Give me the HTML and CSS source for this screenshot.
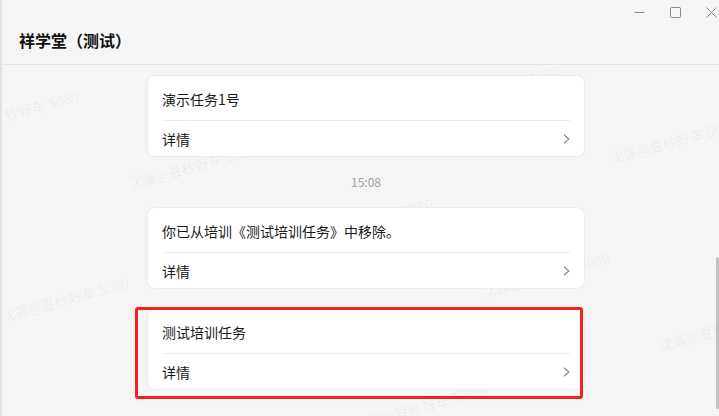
FILE: index.html
```html
<!DOCTYPE html>
<html lang="zh-CN">
<head>
    <meta charset="UTF-8">
    <meta name="viewport" content="width=device-width, initial-scale=1.0">
    <title>祥学堂（测试）</title>
    <link rel="stylesheet" href="styles.css">
</head>
<body>
    <div class="window">
        <header class="titlebar">
            <h1 class="title">祥学堂（测试）</h1>
            <div class="controls">
                <span class="ctl">
                    <svg width="11" height="11" viewBox="0 0 11 11"><path d="M0.5 5.5H10.5" stroke="#8a8a8a" stroke-width="1" fill="none"/></svg>
                </span>
                <span class="ctl">
                    <svg width="11" height="11" viewBox="0 0 11 11"><rect x="0.5" y="0.5" width="10" height="10" rx="1" stroke="#8a8a8a" stroke-width="1" fill="none"/></svg>
                </span>
                <span class="ctl">
                    <svg width="11" height="11" viewBox="0 0 11 11"><path d="M0.5 0.5L10.5 10.5M10.5 0.5L0.5 10.5" stroke="#8a8a8a" stroke-width="1" fill="none"/></svg>
                </span>
            </div>
        </header>

        <main class="feed">
            <div class="watermarks">
                <span class="wm" style="left:-49px;top:57px">沈露@豆秒好车 5080</span>
                <span class="wm" style="left:128px;top:111px">沈露@豆秒好车 5080</span>
                <span class="wm" style="left:305px;top:165px">沈露@豆秒好车 5080</span>
                <span class="wm" style="left:482px;top:219px">沈露@豆秒好车 5080</span>
                <span class="wm" style="left:659px;top:273px">沈露@豆秒好车 5080</span>
                <span class="wm" style="left:255px;top:-22px">沈露@豆秒好车 5080</span>
                <span class="wm" style="left:432px;top:32px">沈露@豆秒好车 5080</span>
                <span class="wm" style="left:609px;top:86px">沈露@豆秒好车 5080</span>
                <span class="wm" style="left:1px;top:244px">沈露@豆秒好车 5080</span>
                <span class="wm" style="left:178px;top:298px">沈露@豆秒好车 5080</span>
                <span class="wm" style="left:355px;top:352px">沈露@豆秒好车 5080</span>
            </div>

            <div class="list">
                <div class="card">
                    <div class="card-title">演示任务1号</div>
                    <div class="card-link">
                        <span>详情</span>
                        <svg class="chevron" width="7" height="10" viewBox="0 0 7 10"><path d="M1 0.8L5.8 5L1 9.2" stroke="#8c8c8c" stroke-width="1.2" fill="none"/></svg>
                    </div>
                </div>

                <div class="time">15:08</div>

                <div class="card">
                    <div class="card-title">你已从培训《测试培训任务》中移除。</div>
                    <div class="card-link">
                        <span>详情</span>
                        <svg class="chevron" width="7" height="10" viewBox="0 0 7 10"><path d="M1 0.8L5.8 5L1 9.2" stroke="#8c8c8c" stroke-width="1.2" fill="none"/></svg>
                    </div>
                </div>

                <div class="card marked">
                    <div class="card-title">测试培训任务</div>
                    <div class="card-link">
                        <span>详情</span>
                        <svg class="chevron" width="7" height="10" viewBox="0 0 7 10"><path d="M1 0.8L5.8 5L1 9.2" stroke="#8c8c8c" stroke-width="1.2" fill="none"/></svg>
                    </div>
                    <div class="mark"></div>
                </div>
            </div>

            <div class="scrollbar"></div>
        </main>
    </div>
</body>
</html>
```

FILE: styles.css
```css
body, html {
    margin: 0;
    padding: 0;
    font-family: "Noto Sans CJK SC", "Microsoft YaHei", sans-serif;
    background-color: #f5f5f5;
}
.window {
    height: 416px;
    border-left: 2px solid #e2e3e6;
    background-color: #f5f5f5;
    overflow: hidden;
}
.titlebar {
    height: 65px;
    box-sizing: border-box;
    border-bottom: 1px solid #e4e4e4;
    display: flex;
    justify-content: space-between;
    background-color: #f5f5f5;
    position: relative;
    z-index: 3;
}
.title {
    margin: 0;
    padding: 29px 0 0 17px;
    font-size: 16px;
    font-weight: 700;
    line-height: 22px;
    color: #111;
}
.controls {
    display: flex;
    height: 24px;
    margin-right: -10px;
}
.ctl {
    width: 36px;
    height: 24px;
    display: flex;
    justify-content: center;
    align-items: center;
}
.feed {
    position: relative;
    height: 351px;
    overflow: hidden;
}
.watermarks {
    position: absolute;
    left: 0;
    top: 0;
    right: 0;
    bottom: 0;
    z-index: 0;
}
.wm {
    position: absolute;
    font-size: 14px;
    line-height: 14px;
    white-space: nowrap;
    color: rgba(0, 0, 0, 0.06);
    transform: rotate(-15deg);
    transform-origin: left bottom;
}
.list {
    position: relative;
    z-index: 1;
    width: 438px;
    margin-left: 145px;
    padding-top: 10px;
    display: flex;
    flex-direction: column;
}
.card {
    background-color: #fff;
    border: 1px solid #ececec;
    border-radius: 8px;
    padding: 0 14px;
}
.card + .card {
    margin-top: 19px;
}
.card-title {
    padding: 13px 0 11px;
    font-size: 14px;
    line-height: 20px;
    color: #1a1a1a;
    border-bottom: 1px solid #ededed;
}
.card-link {
    display: flex;
    justify-content: space-between;
    align-items: center;
    padding: 8px 0 7px;
    font-size: 14px;
    line-height: 20px;
    color: #1a1a1a;
}
.time {
    text-align: center;
    font-size: 12px;
    line-height: 20px;
    padding: 15px 0;
    color: #9da1a8;
}
.marked {
    position: relative;
}
.mark {
    position: absolute;
    left: -13px;
    top: -2px;
    width: 448px;
    height: 92px;
    box-sizing: border-box;
    border: 3px solid #f5221b;
    border-radius: 3px;
}
.scrollbar {
    position: absolute;
    right: 0;
    top: 192px;
    width: 3px;
    height: 152px;
    border-radius: 2px;
    background-color: #c1c1c5;
    z-index: 2;
}
```
